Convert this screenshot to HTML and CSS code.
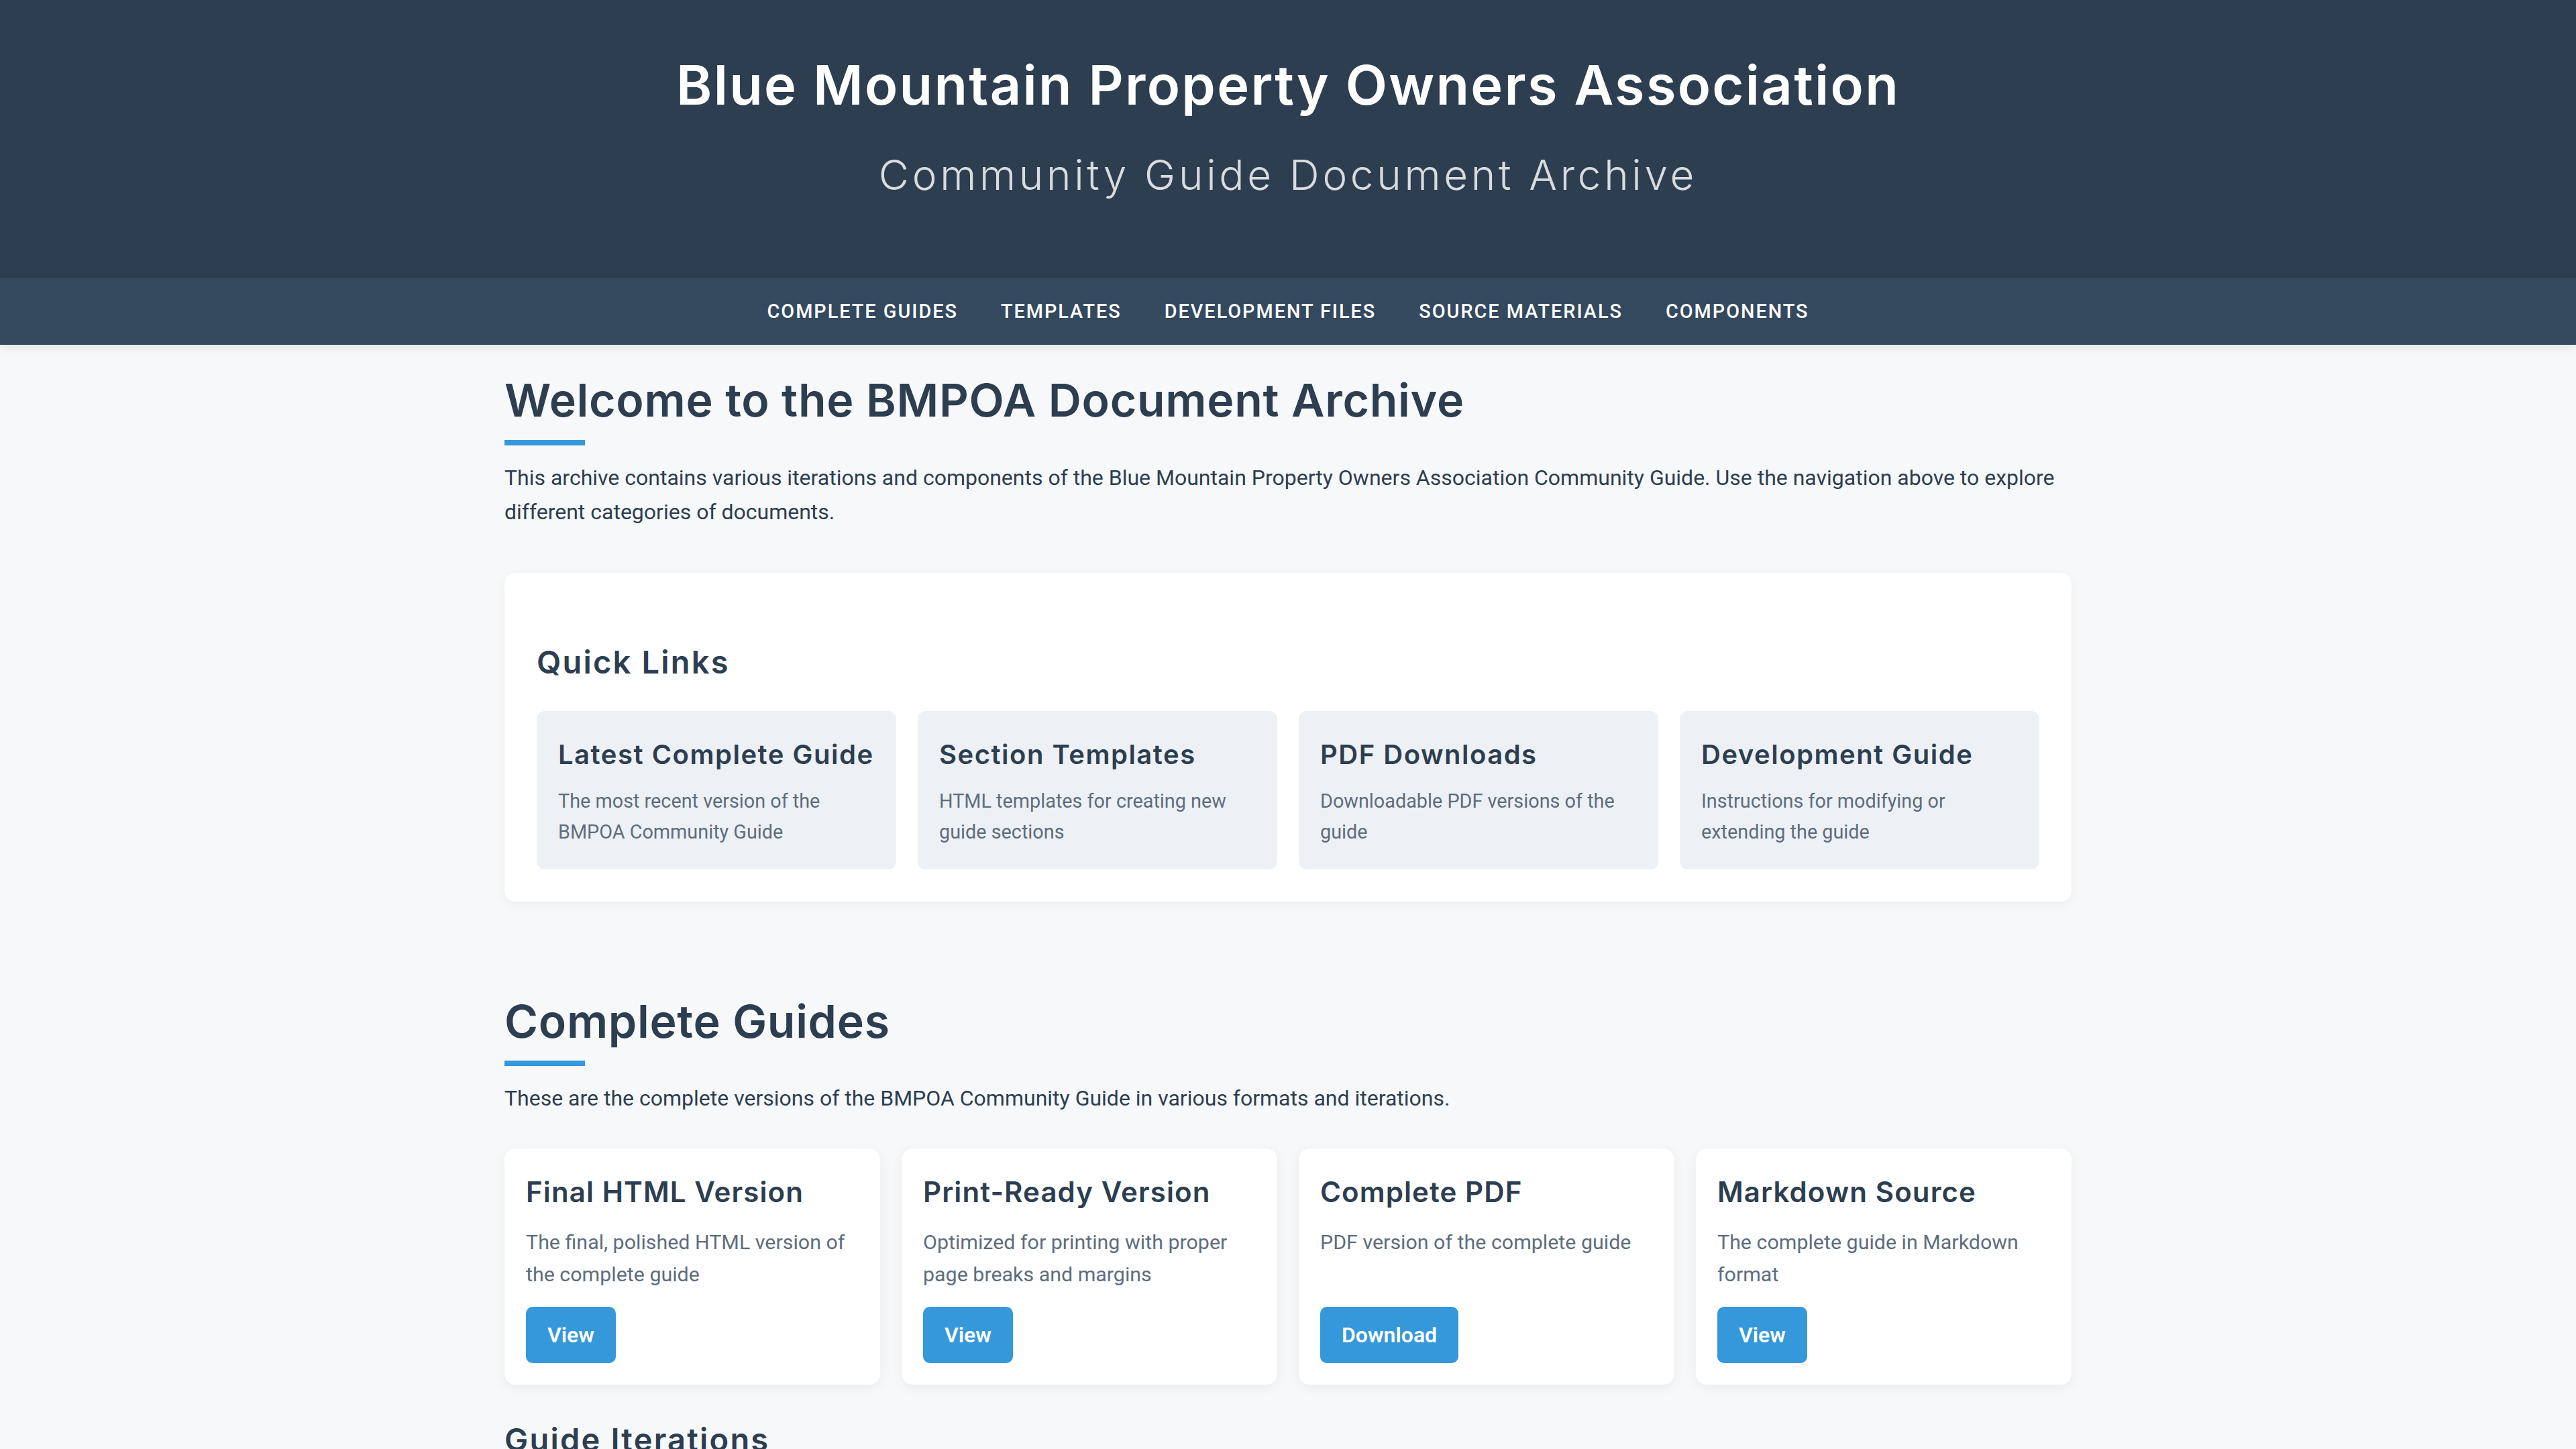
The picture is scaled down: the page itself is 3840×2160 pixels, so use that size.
FILE: index.html
```html
<!DOCTYPE html>
<html lang="en">
<head>
<meta charset="utf-8">
<title>BMPOA Document Archive</title>
<link rel="stylesheet" href="styles.css">
</head>
<body>
<header class="site-header">
  <h1 class="site-title">Blue Mountain Property Owners Association</h1>
  <p class="site-subtitle">Community Guide Document Archive</p>
</header>
<nav class="main-nav">
  <a class="nav-link" href="#complete">Complete Guides</a>
  <a class="nav-link" href="#templates">Templates</a>
  <a class="nav-link" href="#development">Development Files</a>
  <a class="nav-link" href="#source">Source Materials</a>
  <a class="nav-link" href="#components">Components</a>
</nav>
<main class="container">
  <section class="section">
    <h2 class="section-title">Welcome to the BMPOA Document Archive</h2>
    <p class="lead">This archive contains various iterations and components of the Blue Mountain Property Owners Association Community Guide. Use the navigation above to explore different categories of documents.</p>
    <div class="panel">
      <h3 class="panel-title">Quick Links</h3>
      <div class="quick-grid">
        <a class="quick-item" href="#">
          <h4 class="quick-title">Latest Complete Guide</h4>
          <p class="quick-desc">The most recent version of the BMPOA Community Guide</p>
        </a>
        <a class="quick-item" href="#">
          <h4 class="quick-title">Section Templates</h4>
          <p class="quick-desc">HTML templates for creating new guide sections</p>
        </a>
        <a class="quick-item" href="#">
          <h4 class="quick-title">PDF Downloads</h4>
          <p class="quick-desc">Downloadable PDF versions of the guide</p>
        </a>
        <a class="quick-item" href="#">
          <h4 class="quick-title">Development Guide</h4>
          <p class="quick-desc">Instructions for modifying or extending the guide</p>
        </a>
      </div>
    </div>
  </section>
  <section class="section" id="complete">
    <h2 class="section-title">Complete Guides</h2>
    <p class="lead">These are the complete versions of the BMPOA Community Guide in various formats and iterations.</p>
    <div class="card-grid">
      <div class="card">
        <h4 class="card-title">Final HTML Version</h4>
        <p class="card-desc">The final, polished HTML version of the complete guide</p>
        <div class="card-actions"><a class="btn" href="#">View</a></div>
      </div>
      <div class="card">
        <h4 class="card-title">Print-Ready Version</h4>
        <p class="card-desc">Optimized for printing with proper page breaks and margins</p>
        <div class="card-actions"><a class="btn" href="#">View</a></div>
      </div>
      <div class="card">
        <h4 class="card-title">Complete PDF</h4>
        <p class="card-desc">PDF version of the complete guide</p>
        <div class="card-actions"><a class="btn" href="#">Download</a></div>
      </div>
      <div class="card">
        <h4 class="card-title">Markdown Source</h4>
        <p class="card-desc">The complete guide in Markdown format</p>
        <div class="card-actions"><a class="btn" href="#">View</a></div>
      </div>
    </div>
    <h3 class="sub-title">Guide Iterations</h3>
  </section>
</main>
</body>
</html>
```

FILE: styles.css
```css
* {
  box-sizing: border-box;
}

html, body {
  margin: 0;
  padding: 0;
}

body {
  background: #f7f8fa;
  color: #2c3e50;
  font-family: Roboto, "Liberation Sans", Arial, sans-serif;
  font-size: 32px;
  line-height: 1.6;
  overflow: hidden;
}

a {
  text-decoration: none;
  color: inherit;
}

/* Header */
.site-header {
  background: #2c3e50;
  color: #ffffff;
  text-align: center;
  padding: 79px 0 118px;
}

.site-title {
  margin: 0;
  font-family: Inter, "Open Sans", sans-serif;
  font-weight: 600;
  font-size: 81px;
  line-height: 97px;
  letter-spacing: 2.3px;
}

.site-subtitle {
  margin: 49px 0 0;
  font-family: Inter, "Open Sans", sans-serif;
  font-weight: 300;
  font-size: 62px;
  line-height: 71px;
  letter-spacing: 4.7px;
  color: rgba(255, 255, 255, 0.82);
}

/* Nav */
.main-nav {
  position: relative;
  z-index: 2;
  height: 100px;
  background: #34495e;
  display: flex;
  justify-content: center;
  align-items: center;
  box-shadow: 0 4px 14px rgba(0, 0, 0, 0.09);
}

.nav-link {
  padding: 0 32px;
  color: #ffffff;
  font-family: Roboto, sans-serif;
  font-weight: 500;
  font-size: 28.8px;
  line-height: 1.2;
  letter-spacing: 2px;
  text-transform: uppercase;
}

/* Main */
.container {
  max-width: 2400px;
  margin: 0 auto;
  padding: 0 32px;
}

.section {
  padding-top: 42px;
}

.section + .section {
  margin-top: 96px;
}

.section-title {
  margin: 0;
  font-family: Inter, "Open Sans", sans-serif;
  font-weight: 600;
  font-size: 68px;
  line-height: 81.6px;
  letter-spacing: 0.7px;
  color: #2c3e50;
}

.section-title::after {
  content: "";
  display: block;
  width: 120px;
  height: 8px;
  margin-top: 18px;
  background: #3498db;
}

.lead {
  margin: 23px 0 0;
  font-size: 32px;
  line-height: 51.2px;
  color: #2c3e50;
}

/* Quick links panel */
.panel {
  margin-top: 65px;
  background: #ffffff;
  border-radius: 16px;
  padding: 48px;
  box-shadow: 0 4px 16px rgba(0, 0, 0, 0.05);
}

.panel-title {
  margin: 57px 0 0;
  font-family: Inter, "Open Sans", sans-serif;
  font-weight: 600;
  font-size: 47px;
  line-height: 56.4px;
  letter-spacing: 2.2px;
  color: #2c3e50;
}

.quick-grid {
  margin-top: 45px;
  display: grid;
  grid-template-columns: repeat(4, 1fr);
  gap: 32px;
}

.quick-item {
  display: block;
  background: #edf1f5;
  border-radius: 12px;
  padding: 32px;
}

.quick-title {
  margin: 9px 0 0;
  font-family: Inter, "Open Sans", sans-serif;
  font-weight: 600;
  font-size: 40px;
  line-height: 48px;
  letter-spacing: 1.5px;
  white-space: nowrap;
  color: #2c3e50;
}

.quick-desc {
  margin: 22px 0 0;
  font-size: 28.8px;
  line-height: 46.08px;
  color: #5d6d7e;
}

/* Cards */
.card-grid {
  margin-top: 49px;
  display: grid;
  grid-template-columns: repeat(4, 1fr);
  gap: 32px;
}

.card {
  display: flex;
  flex-direction: column;
  background: #ffffff;
  border-radius: 16px;
  padding: 32px;
  box-shadow: 0 4px 18px rgba(0, 0, 0, 0.06);
}

.card-title {
  margin: 7.5px 0 0;
  font-family: Inter, "Open Sans", sans-serif;
  font-weight: 600;
  font-size: 42px;
  line-height: 50.4px;
  letter-spacing: 1.1px;
  color: #2c3e50;
}

.card-desc {
  flex: 1;
  margin: 25.4px 0 0;
  font-size: 30.4px;
  line-height: 48.64px;
  color: #5d6d7e;
}

.card-actions {
  margin-top: 23.4px;
  display: flex;
}

.btn {
  display: inline-block;
  background: #3498db;
  color: #ffffff;
  font-weight: 600;
  font-size: 32px;
  line-height: 52px;
  padding: 16px 32px;
  border-radius: 10px;
}

.sub-title {
  margin: 54px 0 0;
  font-family: Inter, "Open Sans", sans-serif;
  font-weight: 600;
  font-size: 47px;
  line-height: 56.4px;
  letter-spacing: 2.2px;
  color: #2c3e50;
}
```
